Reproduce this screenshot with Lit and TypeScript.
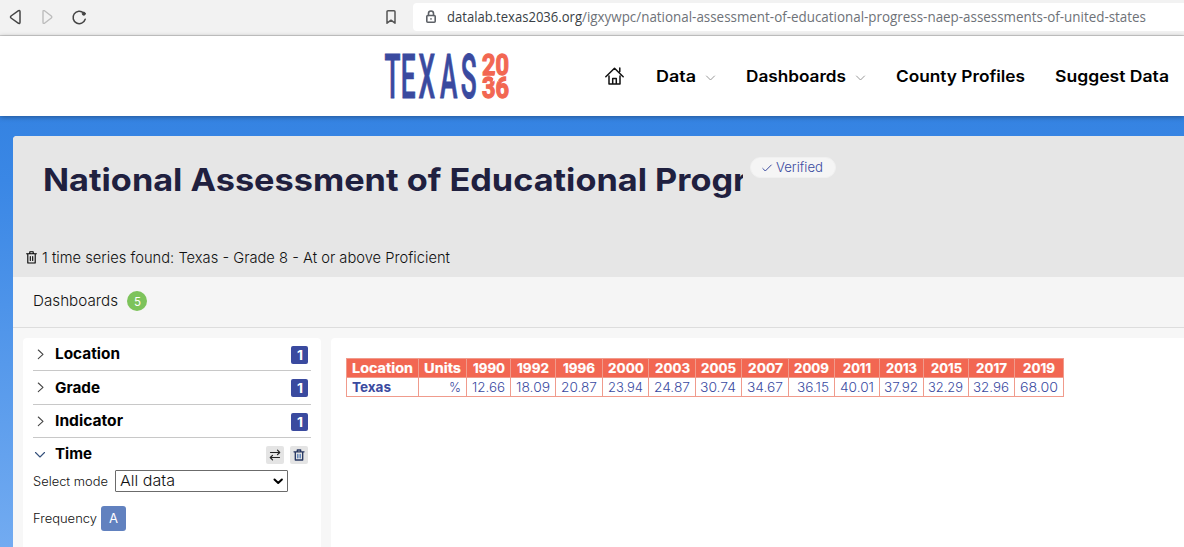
import { LitElement, html, css } from "lit";
import { customElement } from "lit/decorators.js";

/** A single line of text fitted to an exact width, with its baseline at a given height. */
const line = (text: string, width: number, height: number, baseline: number, cls: string) => html`
  <svg class="line" width=${width} height=${height}>
    <text class=${cls} x="0" y=${baseline} textLength=${width} lengthAdjust="spacingAndGlyphs">${text}</text>
  </svg>`;

const shared = css`
  :host { display: block; font-family: Inter, "Open Sans", sans-serif; }
  * { box-sizing: border-box; }
  svg { display: block; flex: none; overflow: visible; }
  .ico { fill: none; stroke: currentColor; stroke-linecap: round; stroke-linejoin: round; }
`;

@customElement("browser-bar")
class BrowserBar extends LitElement {
  static styles = [shared, css`
    .bar { display: flex; height: 36px; background: #f2f2f2; border-bottom: 1px solid #d0d0d0; align-items: flex-start; padding: 3px 0 0 9px; }
    .nav { display: flex; align-items: center; height: 28px; color: #444; }
    .off { color: #bdbdbd; margin: 0 19px 0 21px; }
    .mark { margin: 0 17px 0 auto; color: #555; }
    .left { width: 404px; }
    .url { display: flex; flex: 1; height: 28px; align-items: center; background: #fff; border-radius: 4px 0 0 4px; padding-left: 12px; color: #5c6066; }
    .gap { width: 10px; }
    .host { font: 400 14.5px "Open Sans", sans-serif; fill: #3a3f46; }
    .path { font: 400 14.5px "Open Sans", sans-serif; fill: #6e7278; }
  `];
  render() {
    return html`<div class="bar">
      <div class="nav left">
        <svg class="ico" width="12" height="16" stroke-width="1.500"><path d="M9.500 1.700 2 7q-1 1 0 2l7.500 5.300q1.500.5 1.500-1V2.700q0-1.500-1.500-1z"/></svg>
        <svg class="ico off" width="11" height="16" stroke-width="1.400"><path d="M2.500 1.700 9.300 7q1 1 0 2L2.500 14.300q-1.500.5-1.500-1V2.700q0-1.500 1.500-1z"/></svg>
        <svg class="ico" width="15" height="15" stroke-width="1.500"><path d="M11.600 3A6.200 6.200 0 1 0 13.200 9.300"/><circle cx="11.800" cy="3.700" r="1.600" fill="currentColor" stroke-width=".8"/></svg>
        <svg class="ico mark" width="10" height="14" stroke-width="1.500"><path d="M1 13.200V1.800Q1 .8 2 .8h6q1 0 1 1v11.400L5 10.200z"/></svg>
      </div>
      <div class="url">
        <svg class="ico" width="12" height="14" stroke-width="1.600"><rect x="1.800" y="5.500" width="8.400" height="6.800" rx="1"/><path d="M3.500 5.500V3.500a2.500 2.500 0 0 1 5 0v2M6 8.800v.3"/></svg>
        <span class="gap"></span>
        ${line("datalab.texas2036.org", 135, 28, 19, "host")}
        ${line("/igxywpc/national-assessment-of-educational-progress-naep-assessments-of-united-states", 564, 28, 19, "path")}
      </div>
    </div>`;
  }
}

@customElement("site-header")
class SiteHeader extends LitElement {
  static styles = [shared, css`
    :host { position: relative; }
    .head { display: flex; height: 80px; background: #fff; padding-left: 385px; box-shadow: 0 1px 5px rgba(0, 0, 0, .35); }
    .logo { margin-top: 17px; }
    .texas { font: 500 61px Roboto, sans-serif; fill: #3a4a9f; stroke: #3a4a9f; stroke-width: 1; }
    .year { font: 700 29px Roboto, sans-serif; fill: #f26752; stroke: #f26752; stroke-width: 1.300; }
    .menu { display: flex; align-items: center; margin-left: 96px; gap: 30px; }
    .item { display: flex; align-items: center; gap: 10px; }
    .nav { font: 600 16px Inter, sans-serif; fill: #000; }
    .home { color: #111; margin-right: 2px; }
    .chev { color: #999; margin-top: 3px; }
  `];
  render() {
    const chev = html`<svg class="ico chev" width="10" height="6" stroke-width="1"><path d="M.5 1l4 4 4-4"/></svg>`;
    return html`<div class="head">
      <svg class="logo" width="124" height="48" role="img">
        <g transform="scale(.43 1)"><text class="texas" x="-1 36.500 78 128 176" y="44.500">TEXAS</text></g>
        <text class="year" x="97" y="21.800" textLength="27" lengthAdjust="spacingAndGlyphs">20</text>
        <text class="year" x="97" y="44.500" textLength="27" lengthAdjust="spacingAndGlyphs">36</text>
        <path fill="#fff" d="M110.500 19.500l1.200 3.400h3.700l-2.900 2.300 1 3.500-3-2-3 2 1-3.500-2.900-2.300h3.700z"/>
      </svg>
      <div class="menu">
        <svg class="ico home" width="19" height="18" stroke-width="1.500"><path d="M.8 9.800 9.500 1.300l8.700 8.500M4 9v8h11V9M7.700 17v-5.500h3.600V17M14.800 1v3.500"/></svg>
        <div class="item">${line("Data", 40, 80, 46, "nav")}${chev}</div>
        <div class="item">${line("Dashboards", 100, 80, 46, "nav")}${chev}</div>
        ${line("County Profiles", 129, 80, 46, "nav")}
        ${line("Suggest Data", 114, 80, 46, "nav")}
      </div>
    </div>`;
  }
}

@customElement("filter-panel")
class FilterPanel extends LitElement {
  static styles = [shared, css`
    :host { width: 298px; flex: none; background: #fff; border-radius: 4px 4px 0 0; padding: 0 10px; }
    .row { display: flex; align-items: center; border-bottom: 1px solid #c8c8c8; padding: 1px 3px 0 4px; }
    .r33 { height: 33px; }
    .r34 { height: 34px; }
    .open { height: 32px; border: 0; padding-top: 2px; }
    .arrow { width: 17.500px; color: #444; }
    .grow { flex: 1; }
    .count, .btn { display: flex; align-items: center; justify-content: center; height: 18px; border-radius: 2px; }
    .count { width: 17px; background: #3a4a9f; }
    .btn { width: 18px; background: #e4e4e4; margin-left: 6px; color: #222; }
    .slate { color: #34507a; }
    .navy { color: #24345f; }
    .name { font: 700 15px Inter, sans-serif; fill: #000; }
    .one { font: 700 12.500px Inter, sans-serif; fill: #fff; }
    .small { font: 300 12.500px Inter, sans-serif; fill: #111; }
    .mid { font: 300 15px Inter, sans-serif; fill: #111; }
    .a { font: 400 12.500px Inter, sans-serif; fill: #fff; }
    .field { display: flex; align-items: center; height: 22px; }
    .select { display: flex; align-items: center; width: 173px; height: 22px; margin-left: 7px; border: 1px solid #6b6b6b; border-radius: 1px; padding: 0 4px; }
    .freq { display: flex; align-items: center; height: 25px; margin-top: 14px; gap: 4px; }
    .key { display: flex; align-items: center; justify-content: center; width: 25px; height: 25px; border-radius: 3px; background: #6181bf; }
  `];
  row(name: string, width: number, size: string, h: number, base: number) {
    return html`<div class="row ${size}">
      <div class="arrow"><svg class="ico" width="8" height="12" stroke-width="1.100"><path d="M1.300 1 6 5.300 1.300 9.600"/></svg></div>
      ${line(name, width, h, base, "name")}
      <span class="grow"></span>
      <div class="count">${line("1", 6, 18, 13.5, "one")}</div>
    </div>`;
  }
  render() {
    return html`
      ${this.row("Location", 65, "r33", 31, 20)}
      ${this.row("Grade", 45, "r34", 32, 21)}
      ${this.row("Indicator", 68, "r33", 31, 20)}
      <div class="row open">
        <div class="arrow"><svg class="ico slate" width="12" height="8" stroke-width="1.100"><path d="M-1.500 1.500 3 6l4.500-4.500"/></svg></div>
        ${line("Time", 37, 30, 19, "name")}
        <span class="grow"></span>
        <div class="btn"><svg class="ico" width="12" height="12" stroke-width="1.200"><path d="M1.500 3.500h9M8.500 1.200l2.200 2.300-2.200 2.200M10.500 8.500h-9M3.500 6.300 1.300 8.500l2.200 2.300"/></svg></div>
        <div class="btn navy"><svg class="ico" width="12" height="12" stroke-width="1.300"><path d="M1 2.800h10M4.300 2.500V1h3.400v1.500M2.300 3v8h7.400V3"/><path stroke="#4f78b5" d="M4.800 5.500v3.300M7.200 5.500v3.300"/></svg></div>
      </div>
      <div class="field">
        ${line("Select mode", 75, 22, 16, "small")}
        <div class="select">
          ${line("All data", 55, 20, 15, "mid")}
          <span class="grow"></span>
          <svg class="ico" width="10" height="7" stroke-width="2"><path d="M1.500 1.500 5.200 5l3.700-3.500"/></svg>
        </div>
      </div>
      <div class="freq">
        ${line("Frequency", 64, 25, 17, "small")}
        <div class="key">${line("A", 9, 25, 17, "a")}</div>
      </div>`;
  }
}

const columns: [string, number, string, number][] = [
  ["1990", 32, "12.66", 33], ["1992", 32, "18.09", 34], ["1996", 32, "20.87", 36],
  ["2000", 36, "23.94", 35], ["2003", 35, "24.87", 36], ["2005", 35, "30.74", 36],
  ["2007", 35, "34.67", 36], ["2009", 35, "36.15", 32], ["2011", 28, "40.01", 34],
  ["2013", 31, "37.92", 34], ["2015", 31, "32.29", 35], ["2017", 31, "32.96", 36],
  ["2019", 32, "68.00", 38],
];

@customElement("data-table")
class DataTable extends LitElement {
  static styles = [shared, css`
    :host { flex: 1; background: #fff; border-radius: 4px 0 0 0; padding: 20px 0 0 15px; }
    .grid { display: grid; width: 718px; grid-template-columns: 72px 48px 44px 45px 47px 46px 47px 46px 47px 46px 45px 44px 45px 46px 49px; grid-template-rows: 19px 19px; border-right: 1px solid #f09b8c; border-bottom: 1px solid #f09b8c; }
    .grid > div { display: flex; border-left: 1px solid #f09b8c; border-top: 1px solid #f09b8c; }
    .h { background: #f26752; justify-content: center; }
    .v { justify-content: flex-end; padding-right: 5px; }
    .first { padding-left: 4.500px; }
    .head { font: 700 13.500px Inter, sans-serif; fill: #fff; stroke: #fff; stroke-width: .2; }
    .place { font: 700 13.500px Inter, sans-serif; fill: #3a4a9f; }
    .num { font: 300 13px Inter, sans-serif; fill: #3a4a9f; }
  `];
  render() {
    return html`<div class="grid">
      <div class="h">${line("Location", 61, 18, 14, "head")}</div>
      <div class="h">${line("Units", 37, 18, 14, "head")}</div>
      ${columns.map(c => html`<div class="h">${line(c[0], c[1], 18, 14, "head")}</div>`)}
      <div class="first">${line("Texas", 39, 18, 14, "place")}</div>
      <div class="v">${line("%", 12, 18, 14, "num")}</div>
      ${columns.map(c => html`<div class="v">${line(c[2], c[3], 18, 14, "num")}</div>`)}
    </div>`;
  }
}

@customElement("app-root")
class AppRoot extends LitElement {
  static styles = [shared, css`
    :host { height: 547px; overflow: hidden; }
    .page { height: 431px; padding: 20px 0 0 13px; background: linear-gradient(#3583e2, #3a87e5 15%, #72abf1); }
    .sheet { height: 411px; background: #f7f7f7; border-radius: 4px 0 0 0; overflow: hidden; }
    .hero { height: 141px; background: #e6e6e6; padding: 21px 0 0 13px; }
    .top { display: flex; height: 83px; padding-left: 17px; }
    .clip { width: 700px; overflow: hidden; }
    .title { font: 700 31.500px Inter, sans-serif; fill: #20203f; }
    .pill { display: flex; align-items: center; gap: 4px; width: 86px; height: 21px; margin-left: 7px; padding-left: 11px; border: 1px solid #f0f0f0; border-radius: 11px; background: #f5f5f5; color: #3a4a9f; }
    .ok { font: 300 13px Inter, sans-serif; fill: #3a4a9f; }
    .found { display: flex; align-items: center; gap: 5px; height: 34px; }
    .light { font: 300 15px Inter, sans-serif; fill: #111; }
    .tabs { display: flex; align-items: center; height: 51px; background: #f5f5f5; border-bottom: 1px solid #ddd; padding: 0 0 2px 20px; gap: 9px; }
    .badge { display: flex; justify-content: center; width: 20px; height: 20px; border-radius: 50%; background: #7dc35b; }
    .five { font: 400 12px Inter, sans-serif; fill: #fff; }
    .body { display: flex; height: 219px; padding: 10px 0 0 10px; gap: 10px; }
  `];
  render() {
    return html`
      <browser-bar></browser-bar>
      <site-header></site-header>
      <div class="page"><div class="sheet">
        <div class="hero">
          <div class="top">
            <div class="clip">${line("National Assessment of Educational Progress", 762, 50, 34, "title")}</div>
            <div class="pill">
              <svg class="ico" width="10" height="8" stroke-width="1"><path d="M.8 4.500 3.300 7 9.300 1"/></svg>
              ${line("Verified", 47, 19, 14, "ok")}
            </div>
          </div>
          <div class="found">
            <svg class="ico" width="11" height="13" stroke="#000" stroke-width="1.100"><path d="M.6 2.800h9.800M3.800 2.500V.8h3.400v1.700M1.800 3v9h7.400V3M4.300 5.500v4M6.700 5.500v4"/></svg>
            ${line("1 time series found: Texas - Grade 8 - At or above Proficient", 408, 34, 22.5, "light")}
          </div>
        </div>
        <div class="tabs">
          ${line("Dashboards", 85, 48, 29, "light")}
          <div class="badge">${line("5", 7, 20, 14.5, "five")}</div>
        </div>
        <div class="body">
          <filter-panel></filter-panel>
          <data-table></data-table>
        </div>
      </div></div>`;
  }
}
